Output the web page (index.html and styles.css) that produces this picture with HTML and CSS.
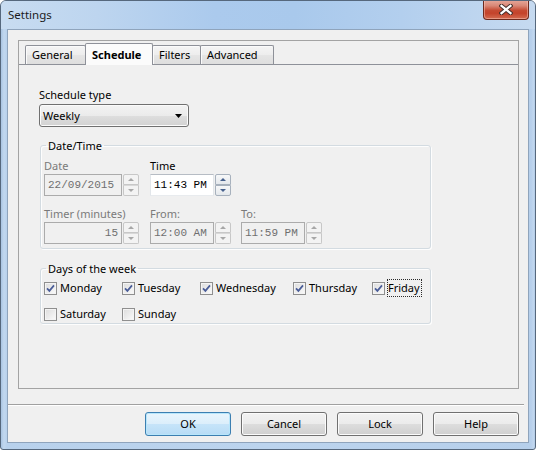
FILE: index.html
```html
<!DOCTYPE html>
<html>
<head>
<meta charset="utf-8">
<link rel="stylesheet" href="styles.css">
</head>
<body>
<div class="window">
  <div class="titlebar">
    <span class="title">Settings</span>
    <div class="close">
      <svg width="14" height="11" viewBox="0 0 14 11"><path d="M2.5 1.8 L11.5 9.2 M11.5 1.8 L2.5 9.2" stroke="#46302c" stroke-width="4.2" stroke-linecap="square" fill="none"/><path d="M2.5 1.8 L11.5 9.2 M11.5 1.8 L2.5 9.2" stroke="#ffffff" stroke-width="2.2" stroke-linecap="square" fill="none"/></svg>
    </div>
  </div>
  <div class="client">
    <div class="frame">
      <div class="tabs">
        <div class="tab t-general">General</div>
        <div class="tab t-schedule active">Schedule</div>
        <div class="tab t-filters">Filters</div>
        <div class="tab t-advanced">Advanced</div>
      </div>
      <div class="page">
        <div class="lbl top-lbl">Schedule type</div>
        <div class="combo">
          <span>Weekly</span>
          <svg width="7" height="4" viewBox="0 0 7 4"><path d="M0 0 H7 L3.5 4 Z" fill="#000"/></svg>
        </div>

        <fieldset class="group dt">
          <legend>Date/Time</legend>
          <div class="dt-grid">
            <div class="cell">
              <div class="lbl dis">Date</div>
              <div class="ctl">
                <div class="field w78 dis">22/09/2015</div>
                <div class="spin dis"><span class="up"></span><span class="dn"></span></div>
              </div>
            </div>
            <div class="cell">
              <div class="lbl">Time</div>
              <div class="ctl">
                <div class="field w64 on">11:43 PM</div>
                <div class="spin on"><span class="up"></span><span class="dn"></span></div>
              </div>
            </div>
            <div class="cell"></div>
            <div class="cell">
              <div class="lbl dis">Timer (minutes)</div>
              <div class="ctl">
                <div class="field w78 dis right">15</div>
                <div class="spin dis"><span class="up"></span><span class="dn"></span></div>
              </div>
            </div>
            <div class="cell">
              <div class="lbl dis">From:</div>
              <div class="ctl">
                <div class="field w64 dis">12:00 AM</div>
                <div class="spin dis"><span class="up"></span><span class="dn"></span></div>
              </div>
            </div>
            <div class="cell">
              <div class="lbl dis">To:</div>
              <div class="ctl">
                <div class="field w64 dis">11:59 PM</div>
                <div class="spin dis"><span class="up"></span><span class="dn"></span></div>
              </div>
            </div>
          </div>
        </fieldset>

        <fieldset class="group days">
          <legend>Days of the week</legend>
          <div class="checks">
            <div class="cb"><span class="box"><svg class="tick" width="11" height="11" viewBox="0 0 11 11"><path d="M2 5.3 L4.4 7.9 L9 2.4" stroke="#4a5d98" stroke-width="1.7" fill="none"/></svg></span><span class="cb-text">Monday</span></div>
            <div class="cb"><span class="box"><svg class="tick" width="11" height="11" viewBox="0 0 11 11"><path d="M2 5.3 L4.4 7.9 L9 2.4" stroke="#4a5d98" stroke-width="1.7" fill="none"/></svg></span><span class="cb-text">Tuesday</span></div>
            <div class="cb"><span class="box"><svg class="tick" width="11" height="11" viewBox="0 0 11 11"><path d="M2 5.3 L4.4 7.9 L9 2.4" stroke="#4a5d98" stroke-width="1.7" fill="none"/></svg></span><span class="cb-text">Wednesday</span></div>
            <div class="cb"><span class="box"><svg class="tick" width="11" height="11" viewBox="0 0 11 11"><path d="M2 5.3 L4.4 7.9 L9 2.4" stroke="#4a5d98" stroke-width="1.7" fill="none"/></svg></span><span class="cb-text">Thursday</span></div>
            <div class="cb"><span class="box"><svg class="tick" width="11" height="11" viewBox="0 0 11 11"><path d="M2 5.3 L4.4 7.9 L9 2.4" stroke="#4a5d98" stroke-width="1.7" fill="none"/></svg></span><span class="cb-text focus">Friday</span></div>
            <div class="cb"><span class="box"></span><span class="cb-text">Saturday</span></div>
            <div class="cb"><span class="box"></span><span class="cb-text">Sunday</span></div>
          </div>
        </fieldset>
      </div>
    </div>
    <div class="sep"></div>
    <div class="buttons">
      <div class="btn default">OK</div>
      <div class="btn">Cancel</div>
      <div class="btn">Lock</div>
      <div class="btn">Help</div>
    </div>
  </div>
</div>
</body>
</html>
```
FILE: styles.css
```css
* { box-sizing: border-box; }
html, body { margin: 0; padding: 0; }
body {
  width: 536px;
  height: 450px;
  overflow: hidden;
  font-family: "Noto Sans", "Open Sans", sans-serif;
  font-size: 11px;
  color: #000;
  background: #fff;
}

.window {
  width: 536px;
  height: 450px;
  border: 1px solid #56687d;
  border-radius: 6px 6px 3px 3px;
  background: linear-gradient(to right, #a9c4e2 0px, #c2d8ef 3px, #b8d1ec 6px, #bcd4ee 50%, #b6cfeb 530px, #c3d8ef 533px, #a9c4e2 534px);
  display: flex;
  flex-direction: column;
  overflow: hidden;
}

.titlebar {
  height: 28px;
  display: flex;
  align-items: flex-start;
  justify-content: space-between;
  padding: 0 6px 0 7px;
  background: linear-gradient(to right, #c8dcf1 0%, #bdd5ef 18%, #abcaed 40%, #a9c9ec 55%, #b3cfee 75%, #c6daf0 100%);
}
.title {
  line-height: 28px;
  color: #1b1b1b;
  font-size: 11.5px;
}
.close {
  margin-top: -1px;
  width: 46px;
  height: 20px;
  border: 1px solid #6d2a1e;
  border-top: none;
  border-radius: 0 0 4px 4px;
  background: linear-gradient(#e6a99c 0%, #d98877 30%, #c54a32 55%, #c4432b 70%, #d46c51 100%);
  box-shadow: inset 0 0 0 1px rgba(255, 210, 200, 0.45);
  display: flex;
  align-items: center;
  justify-content: center;
}

.client {
  flex: 1;
  margin: 0 6px 6px 6px;
  border: 1px solid #8fa4bc;
  background: #f0f0f0;
  display: flex;
  flex-direction: column;
}

.frame {
  margin: 10px 9px 0 10px;
  height: 349px;
  border: 1px solid #a3a3a3;
  display: flex;
  flex-direction: column;
}

.tabs {
  height: 23px;
  padding: 2px 0 0 6px;
  display: flex;
  align-items: flex-end;
}
.tab {
  height: 19px;
  line-height: 18px;
  padding-left: 6px;
  border: 1px solid #8e9199;
  border-bottom: none;
  border-radius: 2px 2px 0 0;
  background: linear-gradient(#f5f5f5, #ededed 50%, #e5e5e5 51%, #dedede);
  box-shadow: inset 1px 1px 0 #fbfbfb;
  margin-left: -1px;
  color: #000;
}
.t-general { width: 61px; margin-left: 0; }
.t-schedule { width: 68px; }
.t-filters { width: 49px; }
.t-advanced { width: 74px; }
.tab.active {
  height: 22px;
  padding-top: 2px;
  margin-bottom: -1px;
  font-weight: bold;
  background: #fbfbfb;
  box-shadow: none;
  position: relative;
  z-index: 1;
}

.page {
  flex: 1;
  border-top: 1px solid #8e9199;
  padding: 21px 0 0 20px;
}

.lbl {
  line-height: 17px;
  height: 17px;
  white-space: nowrap;
}
.lbl.dis { color: #7a7a7a; }

.combo {
  margin-top: 1px;
  width: 150px;
  height: 23px;
  border: 1px solid #707070;
  border-radius: 3px;
  background: linear-gradient(#f3f3f3, #ebebeb 50%, #dedede 51%, #d2d2d2);
  box-shadow: inset 0 0 0 1px #fbfbfb;
  display: flex;
  align-items: center;
  justify-content: space-between;
  padding: 0 6px 0 3px;
  line-height: 21px;
}
.combo svg { display: block; }

.group {
  margin: 0;
  min-width: 0;
  width: 391px;
  border: 1px solid #d3dbe1;
  border-radius: 3px;
  box-shadow: 1px 1px 0 #fdfdfd, inset 1px 1px 0 #fdfdfd;
  padding: 4px 3px 4px 3px;
}
.group legend {
  margin-left: 2px;
  padding: 0 2px;
  line-height: 15px;
  color: #000;
}
.dt { margin: 11px 0 0 1px; }
.days { margin: 12px 0 0 1px; padding-top: 3px; padding-bottom: 0; }

.dt-grid {
  display: grid;
  grid-template-columns: 106px 91px auto;
  row-gap: 9px;
}
.ctl { display: flex; gap: 1px; }
.field {
  height: 22px;
  border: 1px solid #ababab;
  background: #f0f0f0;
  font-family: "Liberation Mono", "DejaVu Sans Mono", monospace;
  font-size: 11px;
  line-height: 20px;
  padding: 0 3px;
  white-space: nowrap;
  overflow: hidden;
}
.field.dis { color: #6f6f6f; }
.field.on {
  background: #fff;
  color: #000;
  border-color: #e2e6ea #e2e6ea #e8ebee #e2e6ea;
  border-top-color: #b6bcc4;
}
.field.right { text-align: right; }
.w78 { width: 78px; }
.w64 { width: 64px; }

.spin {
  width: 16px;
  height: 22px;
  display: flex;
  flex-direction: column;
}
.spin span {
  height: 11px;
  border: 1px solid #c7c7c7;
  background: #f3f3f3;
  display: flex;
  align-items: center;
  justify-content: center;
}
.spin .up { border-radius: 2px 2px 0 0; }
.spin .dn { border-radius: 0 0 2px 2px; border-top-color: #d8d8d8; }
.spin .up::after {
  content: "";
  border-left: 3px solid transparent;
  border-right: 3px solid transparent;
  border-bottom: 3px solid #a7a7a7;
}
.spin .dn::after {
  content: "";
  border-left: 3px solid transparent;
  border-right: 3px solid transparent;
  border-top: 3px solid #a7a7a7;
}
.spin.on span {
  border-color: #a7b1bd;
  background: linear-gradient(#f7f8f9, #e4e8ec);
}
.spin.on .up::after { border-bottom-color: #47618d; }
.spin.on .dn::after { border-top-color: #47618d; }

.checks {
  display: grid;
  grid-template-columns: 78px 78px 93px 79px auto;
  row-gap: 8px;
}
.cb {
  height: 18px;
  display: flex;
  align-items: center;
  white-space: nowrap;
}
.box {
  width: 13px;
  height: 13px;
  flex: none;
  border: 1px solid #8f8f8f;
  background: linear-gradient(135deg, #dcdcdc, #fbfbfb);
  box-shadow: inset 0 0 0 1px #f4f4f4;
}
.tick { display: block; }
.cb-text {
  margin-left: 3px;
  line-height: 16px;
}
.cb-text.focus {
  margin-left: 2px;
  border: 1px dotted #2b2b2b;
  padding-right: 1px;
}

.sep {
  margin: 15px 4px 0 0;
  height: 2px;
  border-top: 1px solid #a0a0a0;
  border-bottom: 1px solid #ffffff;
}

.buttons {
  margin: 6px 9px 0 0;
  display: flex;
  justify-content: flex-end;
  gap: 10px;
}
.btn {
  width: 86px;
  height: 24px;
  border: 1px solid #707070;
  border-radius: 3px;
  background: linear-gradient(#f2f2f2, #ebebeb 50%, #dddddd 51%, #cfcfcf);
  box-shadow: inset 0 0 0 1px #fbfbfb;
  text-align: center;
  line-height: 22px;
}
.btn.default {
  border-color: #3c7fb1;
  background: linear-gradient(#e9f5fc, #dbeefb 50%, #c6e4f9 51%, #b7dcf6);
  box-shadow: inset 0 0 0 1px #b8e6fb;
}
```
